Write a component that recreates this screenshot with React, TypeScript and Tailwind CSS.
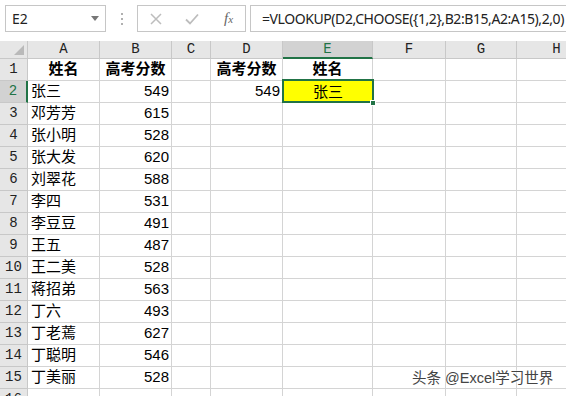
import React from "react";

const COLS = [
  { key: "A", w: "w-[72px]" },
  { key: "B", w: "w-[72px]" },
  { key: "C", w: "w-[39px]" },
  { key: "D", w: "w-[72px]" },
  { key: "E", w: "w-[90px]" },
  { key: "F", w: "w-[73px]" },
  { key: "G", w: "w-[71px]" },
  { key: "H", w: "w-[80px]" },
];

const ROWS: [string, string][] = [
  ["张三", "549"],
  ["邓芳芳", "615"],
  ["张小明", "528"],
  ["张大发", "620"],
  ["刘翠花", "588"],
  ["李四", "531"],
  ["李豆豆", "491"],
  ["王五", "487"],
  ["王二美", "528"],
  ["蒋招弟", "563"],
  ["丁六", "493"],
  ["丁老蔫", "627"],
  ["丁聪明", "546"],
  ["丁美丽", "528"],
];

const cellFont = "font-['Liberation_Sans','Noto_Sans_CJK_SC',sans-serif] text-[15px] text-black";
const headFont = "font-['Liberation_Mono',monospace] text-[14px]";

function FormulaBar() {
  return (
    <div className="flex h-[41px] items-start bg-white pt-[5px]">
      <div className="ml-[5px] flex h-[27px] w-[101px] shrink-0 items-center justify-between border border-[#c6c6c6] bg-white pl-[6px] pr-[6px]">
        <span className="font-['Noto_Sans',sans-serif] text-[14px] text-[#222]">E2</span>
        <span className="h-0 w-0 border-x-[4px] border-t-[5px] border-x-transparent border-t-[#777]" />
      </div>
      <div className="flex h-[27px] w-[31px] shrink-0 flex-col items-center justify-center gap-[3px]">
        <span className="h-[2px] w-[2px] bg-[#b0b0b0]" />
        <span className="h-[2px] w-[2px] bg-[#b0b0b0]" />
        <span className="h-[2px] w-[2px] bg-[#b0b0b0]" />
      </div>
      <div className="flex h-[27px] w-[109px] shrink-0 items-center border border-[#c6c6c6] bg-white">
        <svg width="14" height="14" viewBox="0 0 14 14" className="ml-[11px]">
          <path d="M2 2 L12 12 M12 2 L2 12" stroke="#bdbdbd" strokeWidth="1.5" />
        </svg>
        <svg width="16" height="14" viewBox="0 0 16 14" className="ml-[21px]">
          <path d="M2 7.5 L6 11.5 L14 2.5" stroke="#bdbdbd" strokeWidth="1.8" fill="none" />
        </svg>
        <span className="ml-[24px] font-['Liberation_Serif',serif] text-[15px] italic text-[#666]">
          f<span className="text-[11px]">x</span>
        </span>
      </div>
      <div className="ml-[4px] flex h-[27px] min-w-0 flex-1 items-center overflow-hidden border-y border-l border-[#c6c6c6] bg-white pl-[11px]">
        <span className="whitespace-nowrap font-['Noto_Sans',sans-serif] text-[14px] tracking-[-0.42px] text-[#222]">
          =VLOOKUP(D2,CHOOSE({"{"}1,2{"}"},B2:B15,A2:A15),2,0)
        </span>
      </div>
    </div>
  );
}

function HeaderRow() {
  return (
    <div className="flex h-[18px] bg-[#e6e6e6]">
      <div className="relative w-[28px] shrink-0 border-b border-r border-[#c8c8c8]">
        <span className="absolute bottom-[3px] right-[3px] h-0 w-0 border-b-[10px] border-l-[10px] border-b-[#b9b9b9] border-l-transparent" />
      </div>
      {COLS.map((c) =>
        c.key === "E" ? (
          <div
            key={c.key}
            className={`${c.w} shrink-0 border-b-2 border-r border-b-[#217346] border-r-[#c8c8c8] bg-[#d2d2d2] text-center leading-[17px] text-[#217346] ${headFont}`}
          >
            {c.key}
          </div>
        ) : (
          <div
            key={c.key}
            className={`${c.w} shrink-0 border-b border-r border-[#c8c8c8] text-center leading-[17px] text-[#222] ${headFont}`}
          >
            {c.key}
          </div>
        ),
      )}
    </div>
  );
}

function Cell({
  w,
  children,
  align = "left",
  bold = false,
}: {
  w: string;
  children?: React.ReactNode;
  align?: "left" | "right" | "center";
  bold?: boolean;
}) {
  const al = align === "right" ? "justify-end pr-[2px]" : align === "center" ? "justify-center" : "justify-start pl-[3px]";
  return (
    <div
      className={`flex ${w} shrink-0 items-center whitespace-nowrap border-b border-r border-[#d4d4d4] ${al} ${cellFont} ${bold ? "font-bold" : ""}`}
    >
      {children}
    </div>
  );
}

function RowHead({ n, active = false }: { n: number; active?: boolean }) {
  return (
    <div
      className={`flex w-[28px] shrink-0 items-center justify-center border-b border-[#c8c8c8] ${headFont} ${
        active ? "border-r-2 border-r-[#217346] bg-[#d2d2d2] text-[#217346]" : "border-r border-r-[#c8c8c8] bg-[#e6e6e6] text-[#222]"
      }`}
    >
      {n}
    </div>
  );
}

export default function App() {
  return (
    <div className="relative h-[396px] w-[566px] overflow-hidden bg-white">
      <FormulaBar />
      <HeaderRow />
      {/* row 1 */}
      <div className="flex h-[22px]">
        <RowHead n={1} />
        <Cell w="w-[72px]" align="center" bold>姓名</Cell>
        <Cell w="w-[72px]" align="center" bold>高考分数</Cell>
        <Cell w="w-[39px]" />
        <Cell w="w-[72px]" align="center" bold>高考分数</Cell>
        <Cell w="w-[90px]" align="center" bold>姓名</Cell>
        <Cell w="w-[73px]" />
        <Cell w="w-[71px]" />
        <Cell w="w-[80px]" />
      </div>
      {ROWS.map(([name, score], i) => (
        <div key={i} className="flex h-[22px]">
          <RowHead n={i + 2} active={i === 0} />
          <Cell w="w-[72px]">{name}</Cell>
          <Cell w="w-[72px]" align="right">{score}</Cell>
          <Cell w="w-[39px]" />
          <Cell w="w-[72px]" align="right">{i === 0 ? "549" : null}</Cell>
          {i === 0 ? (
            <div className={`relative flex w-[90px] shrink-0 items-center justify-center bg-[#ffff00] ${cellFont}`}>
              张三
              <span className="pointer-events-none absolute -left-[1px] -top-[2px] h-[24px] w-[92px] border-2 border-[#217346]" />
              <span className="absolute -bottom-[3px] -right-[3px] h-[6px] w-[6px] border border-white bg-[#217346]" />
            </div>
          ) : (
            <Cell w="w-[90px]" />
          )}
          <Cell w="w-[73px]" />
          <Cell w="w-[71px]" />
          <Cell w="w-[80px]" />
        </div>
      ))}
      <div className="flex h-[22px]">
        <RowHead n={16} />
        {COLS.map((c) => (
          <Cell key={c.key} w={c.w} />
        ))}
      </div>
      <div className="absolute left-[412px] top-[368px] whitespace-nowrap font-['Liberation_Sans','Noto_Sans_CJK_SC',sans-serif] text-[14.5px] text-[#444] [text-shadow:0_0_2px_#fff,0_0_2px_#fff]">
        头条 @Excel学习世界
      </div>
    </div>
  );
}
